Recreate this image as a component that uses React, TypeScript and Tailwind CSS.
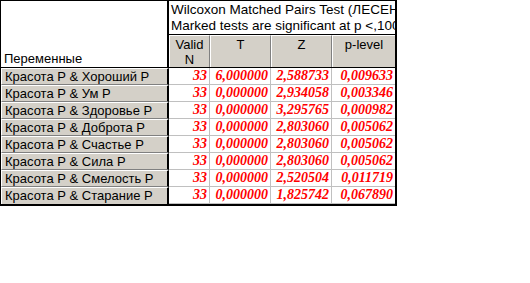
import React from "react";

const rows = [
  { name: "Красота Р & Хороший Р", n: "33", t: "6,000000", z: "2,588733", p: "0,009633" },
  { name: "Красота Р & Ум Р", n: "33", t: "0,000000", z: "2,934058", p: "0,003346" },
  { name: "Красота Р & Здоровье Р", n: "33", t: "0,000000", z: "3,295765", p: "0,000982" },
  { name: "Красота Р & Доброта Р", n: "33", t: "0,000000", z: "2,803060", p: "0,005062" },
  { name: "Красота Р & Счастье Р", n: "33", t: "0,000000", z: "2,803060", p: "0,005062" },
  { name: "Красота Р & Сила Р", n: "33", t: "0,000000", z: "2,803060", p: "0,005062" },
  { name: "Красота Р & Смелость Р", n: "33", t: "0,000000", z: "2,520504", p: "0,011719" },
  { name: "Красота Р & Старание Р", n: "33", t: "0,000000", z: "1,825742", p: "0,067890" },
];

function App() {
  const num =
    "text-right pr-[2px] text-[#ff0000] font-bold italic text-[14px] leading-[16px] font-['Liberation_Serif',serif] border-r border-b border-[#c0c0c0]";
  return (
    <div className="w-[530px] h-[283px] bg-white font-['Liberation_Sans',Arial,sans-serif] text-[13px] text-black">
      <div className="w-[397px] flex flex-col border-l border-t border-b-2 border-r-2 border-black">
        {/* header */}
        <div className="flex h-[67px] border-b border-black">
          <div className="w-[168px] flex items-end pl-[3px] pb-[1px] leading-[15px] border-r-2 border-black">
            Переменные
          </div>
          <div className="flex-1 flex flex-col overflow-hidden">
            <div className="h-[34px] border-b border-black pl-[2px] pt-[1px] text-[13.5px] leading-[16px] whitespace-nowrap overflow-hidden">
              <div>Wilcoxon Matched Pairs Test (ЛЕСЕН</div>
              <div>Marked tests are significant at p &lt;,100</div>
            </div>
            <div className="flex flex-1 bg-[#d4d0c8] leading-[15px]">
              <div className="w-[41px] text-center pt-[1px] border-t border-l border-white border-r border-r-[#808080]">
                Valid
                <br />N
              </div>
              <div className="w-[61px] text-center pt-[1px] border-t border-l border-white border-r border-r-[#808080]">
                T
              </div>
              <div className="w-[61px] text-center pt-[1px] border-t border-l border-white border-r border-r-[#808080]">
                Z
              </div>
              <div className="flex-1 text-center pt-[1px] border-t border-l border-white">p-level</div>
            </div>
          </div>
        </div>
        {/* rows */}
        {rows.map((r, i) => (
          <div key={i} className="flex h-[17px]">
            <div
              className={
                "w-[168px] bg-[#d4d0c8] pl-[3px] leading-[15px] whitespace-nowrap border-t border-l border-white border-r-2 border-r-black " +
                (i < rows.length - 1 ? "border-b border-b-[#808080]" : "")
              }
            >
              {r.name}
            </div>
            <div className="flex-1 flex">
              <div className={"w-[41px] " + num}>{r.n}</div>
              <div className={"w-[61px] " + num}>{r.t}</div>
              <div className={"w-[61px] " + num}>{r.z}</div>
              <div className={"flex-1 " + num + " border-r-0"}>{r.p}</div>
            </div>
          </div>
        ))}
      </div>
    </div>
  );
}

export default App;
